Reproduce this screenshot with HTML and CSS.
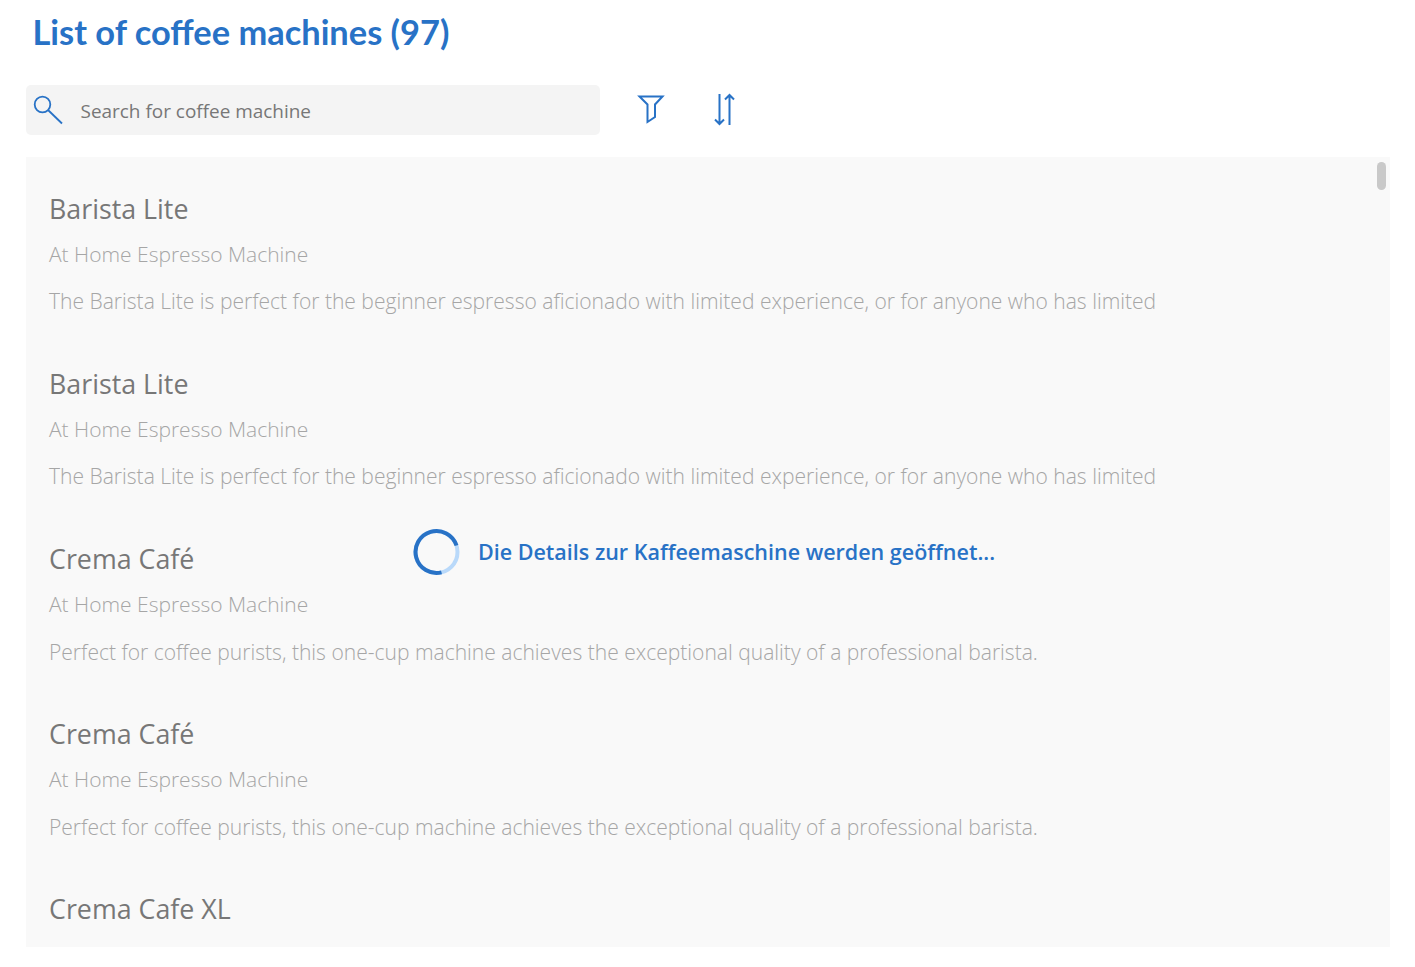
FILE: index.html
```html
<!DOCTYPE html>
<html lang="en">
<head>
<meta charset="utf-8">
<title>List of coffee machines</title>
<link rel="stylesheet" href="styles.css">
</head>
<body>
<main class="page">
  <h1 class="title">List of coffee machines (97)</h1>
  <div class="toolbar">
    <div class="search">
      <svg class="search-icon" width="30" height="30" viewBox="0 0 30 30" fill="none" stroke="#2872c6" stroke-width="1.8"><circle cx="9.500" cy="9.500" r="7.800"/><path d="M15 15L29 28.500"/></svg>
      <span class="search-text">Search for coffee machine</span>
    </div>
    <button class="tool filter" aria-label="Filter">
      <svg width="30" height="32" viewBox="0 0 30 32" fill="none" stroke="#2872c6" stroke-width="2"><path d="M3.500 4.500H26.500L19 12.500V25L11.500 30V12.500Z"/></svg>
    </button>
    <button class="tool sort" aria-label="Sort">
      <svg width="24" height="34" viewBox="0 0 24 34" fill="none" stroke="#2872c6" stroke-width="2"><path d="M6.500 2v30M2 27.500L6.500 32l4.500-4.500M16.500 33V3M12 7.500L16.500 3l4.500 4.500"/></svg>
    </button>
  </div>
  <section class="panel">
    <div class="list">
      <article class="item"><h2>Barista Lite</h2><p class="sub">At Home Espresso Machine</p><p class="desc">The Barista Lite is perfect for the beginner espresso aficionado with limited experience, or for anyone who has limited</p></article>
      <article class="item"><h2>Barista Lite</h2><p class="sub">At Home Espresso Machine</p><p class="desc">The Barista Lite is perfect for the beginner espresso aficionado with limited experience, or for anyone who has limited</p></article>
      <article class="item"><h2>Crema Café</h2><p class="sub">At Home Espresso Machine</p><p class="desc desc-low">Perfect for coffee purists, this one-cup machine achieves the exceptional quality of a professional barista.</p></article>
      <article class="item"><h2>Crema Café</h2><p class="sub">At Home Espresso Machine</p><p class="desc desc-low">Perfect for coffee purists, this one-cup machine achieves the exceptional quality of a professional barista.</p></article>
      <article class="item"><h2>Crema Cafe XL</h2></article>
    </div>
    <div class="scrollbar"></div>
    <div class="loading">
      <svg class="spinner" width="48" height="48" viewBox="0 0 48 48" fill="none" stroke-width="4"><circle cx="24.500" cy="24" r="21" stroke="#b9d9fa"/><path d="M44.500 17.500A21 21 0 1 0 29.500 44.400" stroke="#2872c6"/></svg>
      <span class="loading-text">Die Details zur Kaffeemaschine werden geöffnet...</span>
    </div>
  </section>
</main>
</body>
</html>
```
FILE: styles.css
```css
* { box-sizing: border-box; }
html, body { margin: 0; height: 100%; background: #fff; overflow: hidden; }
.page { padding: 0 25px 0 26px; font-family: "Open Sans", sans-serif; }
.title {
  margin: 0 0 0 6.500px;
  height: 85px;
  padding-top: 10px;
  font: 700 34.4px/44px Lato, sans-serif;
  color: #2872c6;
}
.toolbar { display: flex; align-items: center; height: 50px; }
.search {
  width: 574px;
  height: 50px;
  display: flex;
  align-items: center;
  background: #f4f4f4;
  border-radius: 5px;
  padding-left: 7px;
}
.search-icon { flex: none; }
.search-text { margin-left: 17.500px; font-size: 18.950px; color: #777; position: relative; top: 1px; }
.tool { border: 0; padding: 0; background: none; display: flex; }
.filter { margin-left: 36px; margin-top: -4px; }
.sort { margin-left: 47px; margin-top: -2px; }
.panel {
  position: relative;
  margin-top: 22px;
  height: 790px;
  background: #f9f9f9;
  overflow: hidden;
}
.list { padding: 30px 23px 0; }
.item { height: 175px; }
.item h2 { margin: 0; font-size: 26.800px; font-weight: 400; line-height: 44px; color: #777; }
.sub { margin: 0; padding-top: 1px; font-size: 21px; font-weight: 300; line-height: 44px; color: #a6a6a6; }
.desc { margin: 0; padding-top: 3px; font-size: 21.050px; font-weight: 300; line-height: 44px; color: #a6a6a6; white-space: nowrap; }
.desc-low { padding-top: 4px; }
.scrollbar { position: absolute; top: 5px; right: 4px; width: 9px; height: 28px; border-radius: 5px; background: #c9c9c9; }
.loading { position: absolute; left: 386px; top: 371px; display: flex; align-items: center; gap: 18px; }
.spinner { flex: none; }
.loading-text { font-size: 21.500px; font-weight: 600; color: #2872c6; position: relative; top: -1px; }
```
